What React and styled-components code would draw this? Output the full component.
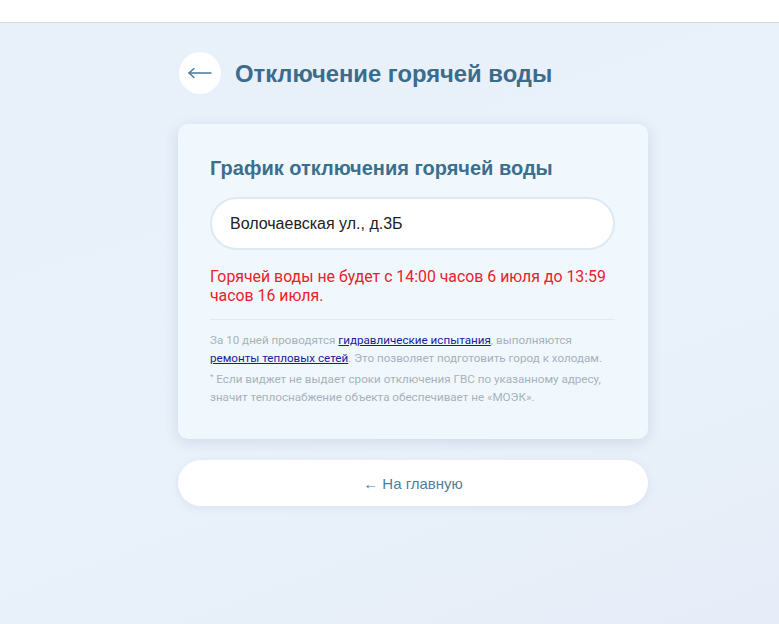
import React from 'react';
import styled, { createGlobalStyle } from 'styled-components';

const GlobalStyle = createGlobalStyle`
  html, body {
    margin: 0;
    padding: 0;
  }
  body {
    background: #e8f0fa;
    font-family: "Liberation Sans", Arial, sans-serif;
    min-height: 624px;
  }
`

const TopBar = styled.div`
  height: 22px;
  background: #ffffff;
  border-bottom: 1px solid #d9d9d9;
  box-shadow: 0 1px 0 #ffffff, 0 2px 0 #f3f6fa;
`

const Page = styled.main`
  min-height: 601px;
  padding: 29px 0 40px 178px;
  background: linear-gradient(160deg, #e8f0fa 0%, #e9f1fa 60%, #e6edf8 100%);
  box-sizing: border-box;
`

const Column = styled.div`
  width: 470px;
  display: flex;
  flex-direction: column;
`

const HeaderRow = styled.div`
  display: flex;
  align-items: center;
  gap: 14px;
  margin-left: 1px;
`

const BackCircle = styled.button`
  width: 42px;
  height: 42px;
  border-radius: 50%;
  border: none;
  background: #ffffff;
  display: flex;
  align-items: center;
  justify-content: center;
  padding: 0;
  cursor: pointer;
  color: #4a7898;
`

const PageTitle = styled.h1`
  margin: 2px 0 0;
  font-size: 23.8px;
  font-weight: 700;
  color: #3b6c8c;
`

const Card = styled.section`
  margin-top: 30px;
  background: #f1f8fd;
  border-radius: 10px;
  box-shadow: 0 3px 14px rgba(90, 110, 140, 0.18);
  padding: 32px 33px 33px 32px;
`

const CardTitle = styled.h2`
  margin: 0;
  font-size: 20px;
  line-height: 24px;
  font-weight: 700;
  color: #3c6f8c;
`

const AddressField = styled.div`
  margin-top: 17px;
  height: 53px;
  box-sizing: border-box;
  background: #ffffff;
  border: 2px solid #dde9f3;
  border-radius: 27px;
  display: flex;
  align-items: center;
  padding-left: 18px;
  font-size: 16px;
  color: #222222;
`

const Alert = styled.p`
  margin: 17px 0 0;
  font-family: Roboto, "Liberation Sans", sans-serif;
  font-size: 15.85px;
  line-height: 19px;
  color: #e8212b;
`

const Divider = styled.hr`
  margin: 14px 0 0;
  border: none;
  border-top: 1px solid #e1e8ef;
`

const Note = styled.p`
  margin: ${p => (p.$first ? '11px' : '3px')} 0 0;
  font-family: Roboto, "Liberation Sans", sans-serif;
  font-size: 11.65px;
  line-height: 18px;
  color: #a7b1bc;

  a {
    color: #1b1ba0;
    text-decoration: underline;
  }
`

const Star = styled.span`
  position: relative;
  top: -4px;
  font-size: 8px;
  line-height: 8px;
`

const HomeButton = styled.button`
  margin-top: 21px;
  height: 46px;
  border: none;
  border-radius: 23px;
  background: #ffffff;
  box-shadow: 0 2px 8px rgba(120, 140, 170, 0.12);
  font-family: "Liberation Sans", Arial, sans-serif;
  font-size: 15px;
  color: #4e7fa0;
  cursor: pointer;
`

const ArrowIcon = () => (
  <svg width="26" height="12" viewBox="0 0 26 12" fill="none" stroke="currentColor" strokeWidth="1.4" strokeLinecap="round">
    <line x1="2" y1="6" x2="24" y2="6" />
    <polyline points="7 1.5 2 6 7 10.5" />
  </svg>
)

export default function App() {
  return (
    <>
      <GlobalStyle />
      <TopBar />
      <Page>
        <Column>
          <HeaderRow>
            <BackCircle aria-label="Назад">
              <ArrowIcon />
            </BackCircle>
            <PageTitle>Отключение горячей воды</PageTitle>
          </HeaderRow>

          <Card>
            <CardTitle>График отключения горячей воды</CardTitle>
            <AddressField>Волочаевская ул., д.3Б</AddressField>
            <Alert>Горячей воды не будет с 14:00 часов 6 июля до 13:59 часов 16 июля.</Alert>
            <Divider />
            <Note $first>
              За 10 дней проводятся <a href="#">гидравлические испытания</a>, выполняются{' '}
              <a href="#">ремонты тепловых сетей</a>. Это позволяет подготовить город к холодам.
            </Note>
            <Note>
              <Star>*</Star> Если виджет не выдает сроки отключения ГВС по указанному адресу,
              значит теплоснабжение объекта обеспечивает не «МОЭК».
            </Note>
          </Card>

          <HomeButton>← На главную</HomeButton>
        </Column>
      </Page>
    </>
  );
}
